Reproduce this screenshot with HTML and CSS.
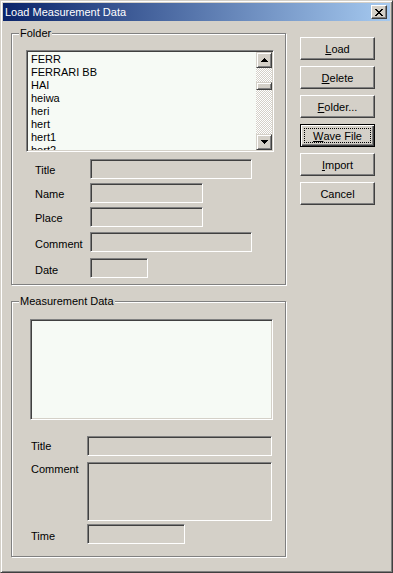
FILE: index.html
```html
<!DOCTYPE html>
<html lang="en">
<head>
  <meta charset="UTF-8">
  <title>Load Measurement Data</title>
  <link rel="stylesheet" href="styles.css">
</head>
<body>
<div class="window">
  <div class="titlebar">
    <span class="caption">Load Measurement Data</span>
    <button class="btn-close" title="Close">
      <svg width="8" height="7" viewBox="0 0 8 7"><path d="M0 0h2v1H0zM6 0h2v1H6zM1 1h2v1H1zM5 1h2v1H5zM2 2h4v1H2zM3 3h2v1H3zM2 4h4v1H2zM1 5h2v1H1zM5 5h2v1H5zM0 6h2v1H0zM6 6h2v1H6z" fill="#000"/></svg>
    </button>
  </div>

  <div class="client">
    <div class="left">
      <fieldset class="group group-folder">
        <legend>Folder</legend>
        <div class="group-body body-folder">
          <div class="listbox">
            <ul class="items">
              <li>FERR</li>
              <li>FERRARI BB</li>
              <li>HAI</li>
              <li>heiwa</li>
              <li>heri</li>
              <li>hert</li>
              <li>hert1</li>
              <li>hert2</li>
            </ul>
            <div class="scrollbar">
              <div class="sb-btn">
                <svg width="7" height="4" viewBox="0 0 7 4"><path d="M3 0h1v1H3zM2 1h3v1H2zM1 2h5v1H1zM0 3h7v1H0z" fill="#000"/></svg>
              </div>
              <div class="sb-track"><div class="sb-thumb"></div></div>
              <div class="sb-btn">
                <svg width="7" height="4" viewBox="0 0 7 4"><path d="M0 0h7v1H0zM1 1h5v1H1zM2 2h3v1H2zM3 3h1v1H3z" fill="#000"/></svg>
              </div>
            </div>
          </div>

          <div class="fields fields-folder">
            <label>Title</label><div class="edit w-162"></div>
            <label>Name</label><div class="edit w-113"></div>
            <label>Place</label><div class="edit w-113"></div>
            <label class="shift-1">Comment</label><div class="edit w-162 shift-1"></div>
            <label class="shift-2">Date</label><div class="edit w-58 shift-2"></div>
          </div>
        </div>
      </fieldset>

      <fieldset class="group group-data">
        <legend>Measurement Data</legend>
        <div class="group-body body-data">
          <div class="preview"></div>

          <div class="fields fields-data">
            <label class="lbl-title">Title</label><div class="edit w-185"></div>
            <label class="lbl-comment">Comment</label><div class="edit w-185 tall"></div>
            <label class="lbl-time">Time</label><div class="edit w-98"></div>
          </div>
        </div>
      </fieldset>
    </div>

    <div class="buttons">
      <button class="btn"><span class="face"><u>L</u>oad</span></button>
      <button class="btn"><span class="face"><u>D</u>elete</span></button>
      <button class="btn"><span class="face"><u>F</u>older...</span></button>
      <button class="btn btn-default"><span class="face focus"><u>W</u>ave File</span></button>
      <button class="btn"><span class="face"><u>I</u>mport</span></button>
      <button class="btn"><span class="face">Cancel</span></button>
    </div>
  </div>
</div>
</body>
</html>
```

FILE: styles.css
```css
body {
  margin: 0;
  background: #d4d0c8;
  font-family: "Liberation Sans", Arial, sans-serif;
  font-size: 11px;
  line-height: 13px;
  color: #000;
}

.window {
  width: 393px;
  height: 573px;
  box-sizing: border-box;
  padding: 2px;
  background: #d4d0c8;
  border: 1px solid;
  border-color: #d4d0c8 #404040 #404040 #d4d0c8;
  box-shadow: inset 1px 1px #fff, inset -1px -1px #808080;
}

/* title bar */
.titlebar {
  height: 18px;
  display: flex;
  align-items: center;
  justify-content: space-between;
  padding: 0 3px 0 2px;
  background: linear-gradient(to right, #0a246a, #a6caf0);
  color: #fff;
}

.caption {
  font-size: 11px;
}

.btn-close {
  width: 16px;
  height: 14px;
  padding: 0;
  display: flex;
  align-items: center;
  justify-content: center;
  background: #d4d0c8;
  border: 1px solid;
  border-color: #fff #404040 #404040 #fff;
  box-shadow: inset -1px -1px #808080;
}

/* dialog body */
.client {
  display: flex;
  padding-left: 8px;
}

.group {
  margin: 0;
  padding: 0;
  min-width: 0;
  width: 275px;
  box-sizing: border-box;
  border: 1px solid #808080;
  box-shadow: inset 1px 1px #fff, 1px 1px #fff;
}

.group legend {
  margin-left: 7px;
  padding: 0 1px;
  line-height: 12px;
  background: #d4d0c8;
}

.group-folder {
  margin-top: 6px;
}

.group-data {
  margin-top: 10px;
}

.body-folder {
  padding: 11px 0 6px 14px;
}

.body-data {
  padding: 12px 0 12px 18px;
}

/* list box */
.listbox {
  width: 248px;
  height: 102px;
  box-sizing: border-box;
  display: flex;
  background: #f6faf5;
  border: 1px solid;
  border-color: #808080 #fff #fff #808080;
  box-shadow: inset 1px 1px #404040, inset -1px -1px #d4d0c8;
  padding: 1px;
}

.items {
  flex: 1;
  margin: 0;
  padding: 1px 0 0 3px;
  list-style: none;
  overflow: hidden;
}

.scrollbar {
  width: 16px;
  display: flex;
  flex-direction: column;
  background: repeating-conic-gradient(#d4d0c8 0 25%, #fff 0 50%) 0 0 / 2px 2px;
}

.sb-btn {
  width: 16px;
  height: 16px;
  box-sizing: border-box;
  display: flex;
  align-items: center;
  justify-content: center;
  background: #d4d0c8;
  border: 1px solid;
  border-color: #d4d0c8 #404040 #404040 #d4d0c8;
  box-shadow: inset 1px 1px #fff, inset -1px -1px #808080;
}

.sb-track {
  flex: 1;
  padding-top: 14px;
}

.sb-thumb {
  height: 8px;
  box-sizing: border-box;
  background: #d4d0c8;
  border: 1px solid;
  border-color: #d4d0c8 #404040 #404040 #d4d0c8;
  box-shadow: inset 1px 1px #fff, inset -1px -1px #808080;
}

/* fields */
.fields {
  display: grid;
  align-items: start;
}

.fields-folder {
  margin: 7px 0 0 9px;
  grid-template-columns: 55px auto;
  row-gap: 4px;
}

.fields-folder label {
  padding-top: 5px;
}

.fields-folder .shift-1 { margin-top: 1px; }
.fields-folder .shift-2 { margin-top: 2px; }
.fields-folder label.shift-1 { padding-top: 6px; }
.fields-folder label.shift-2 { padding-top: 6px; }

.fields-data {
  margin: 16px 0 0 1px;
  grid-template-columns: 56px auto;
}

.fields-data .edit {
  margin-bottom: 6px;
}

.fields-data .tall {
  margin-bottom: 3px;
}

.lbl-title { padding-top: 4px; }
.lbl-comment { padding-top: 1px; }
.lbl-time { padding-top: 6px; }

.edit {
  height: 20px;
  box-sizing: border-box;
  background: #d4d0c8;
  border: 1px solid;
  border-color: #808080 #fff #fff #808080;
  box-shadow: inset 1px 1px #404040, inset -1px -1px #d4d0c8;
}

.fields-data .edit:last-child {
  margin-bottom: 0;
}

.w-162 { width: 162px; }
.w-113 { width: 113px; }
.w-58 { width: 58px; }
.w-185 { width: 185px; }
.w-98 { width: 98px; }
.tall { height: 59px; }

.preview {
  width: 243px;
  height: 101px;
  box-sizing: border-box;
  background: #f6faf5;
  border: 1px solid;
  border-color: #808080 #fff #fff #808080;
  box-shadow: inset 1px 1px #404040, inset -1px -1px #d4d0c8;
}

/* command buttons */
.buttons {
  display: flex;
  flex-direction: column;
  gap: 6px;
  margin: 16px 0 0 14px;
}

.btn {
  width: 75px;
  height: 23px;
  box-sizing: border-box;
  padding: 3px;
  display: flex;
  font-family: inherit;
  font-size: 11px;
  color: #000;
  background: #d4d0c8;
  border: 1px solid;
  border-color: #fff #404040 #404040 #fff;
  box-shadow: inset -1px -1px #808080;
}

.btn-default {
  border-color: #000;
  box-shadow: inset 1px 1px #fff, inset -1px -1px #404040, inset -2px -2px #808080;
}

.face {
  flex: 1;
  display: flex;
  align-items: center;
  justify-content: center;
  border: 1px dotted transparent;
}

.face.focus {
  border-color: #000;
}
```
